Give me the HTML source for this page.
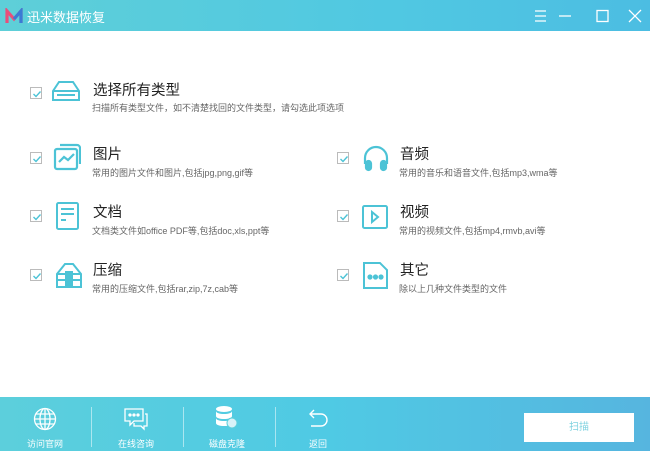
<!DOCTYPE html>
<html><head><meta charset="utf-8"><style>
*{margin:0;padding:0;box-sizing:border-box}
body{width:650px;height:451px;background:#fff;position:relative;overflow:hidden;font-family:"Liberation Sans","Noto Sans CJK SC",sans-serif}
.top{position:absolute;left:0;top:0;width:650px;height:31px;background:linear-gradient(90deg,#5ecfd8,#50c8e2 60%,#4cbde2)}
.title{position:absolute;left:27px;top:7px;color:#fff;font-size:13px}
.bot{position:absolute;left:0;top:397px;width:650px;height:54px;background:linear-gradient(90deg,#5ccfdc,#4fcae4 50%,#56b5df)}
.cb{position:absolute;width:12px;height:12px;border:1px solid #bbb;background:#fff}
.cb svg{position:absolute;left:1px;top:1px}
.t{position:absolute;font-size:14.5px;color:#222}
.s{position:absolute;font-size:9px;color:#666;white-space:nowrap}
.ic{position:absolute}
.bl{position:absolute;color:#fff;font-size:9px;text-align:center;width:60px}
.sep{position:absolute;top:407px;width:1px;height:40px;background:rgba(255,255,255,.5)}
</style></head><body>
<div class="top">
<svg style="position:absolute;left:5px;top:8px" width="18" height="16"><path d="M2 15V3l7 8 7-8v12" fill="none" stroke="#e84f7a" stroke-width="3.2"/><path d="M9 11l7-8v12" fill="none" stroke="#3a7bd5" stroke-width="3.2"/></svg>
<div class="title">迅米数据恢复</div>
<svg style="position:absolute;left:533px;top:9px" width="110" height="14" fill="none" stroke="#fff" stroke-width="1.3">
<path d="M2 2h11M2 7h11M2 12h11"/><path d="M26 7h12"/><rect x="64" y="1.5" width="11" height="11"/><path d="M96 1l12 12M108 1L96 13"/></svg>
</div>

<div class="cb" style="left:30px;top:87px"><svg width="10" height="10"><path d="M1.5 5l2.5 2.5L8.5 2.5" fill="none" stroke="#4cc3d6" stroke-width="1.4"/></svg></div>
<svg class="ic" style="left:52px;top:80px" width="28" height="22" fill="none" stroke="#4cc3d6" stroke-width="2"><path d="M7 2h14l6 9v9H1v-9z"/><path d="M1 11h26M5 15h18"/></svg>
<div class="t" style="left:93px;top:79px">选择所有类型</div>
<div class="s" style="left:92px;top:101px">扫描所有类型文件，如不清楚找回的文件类型，请勾选此项选项</div>

<div class="cb" style="left:30px;top:152px"><svg width="10" height="10"><path d="M1.5 5l2.5 2.5L8.5 2.5" fill="none" stroke="#4cc3d6" stroke-width="1.4"/></svg></div>
<svg class="ic" style="left:53px;top:143px" width="28" height="28" fill="none" stroke="#4cc3d6" stroke-width="2.2"><rect x="2" y="6" width="22" height="20" rx="2"/><path d="M7 2h17a3 3 0 0 1 3 3v16"/><path d="M6 19l5-5 4 3 6-6"/></svg>
<div class="t" style="left:93px;top:143px">图片</div>
<div class="s" style="left:92px;top:166px">常用的图片文件和图片,包括jpg,png,gif等</div>

<div class="cb" style="left:30px;top:210px"><svg width="10" height="10"><path d="M1.5 5l2.5 2.5L8.5 2.5" fill="none" stroke="#4cc3d6" stroke-width="1.4"/></svg></div>
<svg class="ic" style="left:56px;top:202px" width="24" height="28" fill="none" stroke="#4cc3d6" stroke-width="2"><rect x="1" y="1" width="21" height="26" rx="1.5"/><path d="M5 7h13M5 12h13M5 18h5" /></svg>
<div class="t" style="left:93px;top:201px">文档</div>
<div class="s" style="left:92px;top:224px">文档类文件如office PDF等,包括doc,xls,ppt等</div>

<div class="cb" style="left:30px;top:269px"><svg width="10" height="10"><path d="M1.5 5l2.5 2.5L8.5 2.5" fill="none" stroke="#4cc3d6" stroke-width="1.4"/></svg></div>
<svg class="ic" style="left:55px;top:262px" width="28" height="26" fill="none" stroke="#4cc3d6" stroke-width="2"><path d="M2 12L10 2h8l8 10v13H2z"/><path d="M2 12h24M2 18h24"/><rect x="11" y="10" width="6" height="15" fill="#4cc3d6"/></svg>
<div class="t" style="left:93px;top:259px">压缩</div>
<div class="s" style="left:92px;top:282px">常用的压缩文件,包括rar,zip,7z,cab等</div>

<div class="cb" style="left:337px;top:152px"><svg width="10" height="10"><path d="M1.5 5l2.5 2.5L8.5 2.5" fill="none" stroke="#4cc3d6" stroke-width="1.4"/></svg></div>
<svg class="ic" style="left:362px;top:144px" width="28" height="28" fill="none" stroke="#4cc3d6" stroke-width="2.2"><path d="M3 20v-6a11 11 0 0 1 22 0v6"/><rect x="4" y="17" width="5" height="9" rx="2.5" fill="#4cc3d6"/><rect x="19" y="17" width="5" height="9" rx="2.5" fill="#4cc3d6"/></svg>
<div class="t" style="left:400px;top:143px">音频</div>
<div class="s" style="left:399px;top:166px">常用的音乐和语音文件,包括mp3,wma等</div>

<div class="cb" style="left:337px;top:210px"><svg width="10" height="10"><path d="M1.5 5l2.5 2.5L8.5 2.5" fill="none" stroke="#4cc3d6" stroke-width="1.4"/></svg></div>
<svg class="ic" style="left:362px;top:205px" width="26" height="24" fill="none" stroke="#4cc3d6" stroke-width="2"><rect x="1" y="1" width="24" height="22" rx="1.5"/><path d="M10 7l6 5-6 5z"/></svg>
<div class="t" style="left:400px;top:201px">视频</div>
<div class="s" style="left:399px;top:224px">常用的视频文件,包括mp4,rmvb,avi等</div>

<div class="cb" style="left:337px;top:269px"><svg width="10" height="10"><path d="M1.5 5l2.5 2.5L8.5 2.5" fill="none" stroke="#4cc3d6" stroke-width="1.4"/></svg></div>
<svg class="ic" style="left:362px;top:262px" width="26" height="27" fill="none" stroke="#4cc3d6" stroke-width="2"><path d="M2 1h16l7 7v18H2z"/><circle cx="8" cy="15" r="1.6" fill="#4cc3d6"/><circle cx="13.5" cy="15" r="1.6" fill="#4cc3d6"/><circle cx="19" cy="15" r="1.6" fill="#4cc3d6"/></svg>
<div class="t" style="left:400px;top:259px">其它</div>
<div class="s" style="left:399px;top:282px">除以上几种文件类型的文件</div>

<div class="bot"></div>
<svg style="position:absolute;left:33px;top:407px" width="24" height="24" fill="none" stroke="#fff" stroke-width="1.3"><circle cx="12" cy="12" r="10.5"/><ellipse cx="12" cy="12" rx="5" ry="10.5"/><path d="M12 1.5v21M1.5 12h21M3 7h18M3 17h18"/></svg>
<div class="bl" style="left:15px;top:437px">访问官网</div>
<div class="sep" style="left:91px"></div>
<svg style="position:absolute;left:123px;top:407px" width="26" height="24" fill="none" stroke="#fff" stroke-width="1.3"><path d="M2 2h18v12h-9l-4 4v-4H2z"/><path d="M22 7h2v12h-3v3l-3-3h-7v-3"/><circle cx="7" cy="8" r="1" fill="#fff"/><circle cx="11" cy="8" r="1" fill="#fff"/><circle cx="15" cy="8" r="1" fill="#fff"/></svg>
<div class="bl" style="left:106px;top:437px">在线咨询</div>
<div class="sep" style="left:183px"></div>
<svg style="position:absolute;left:214px;top:405px" width="26" height="26" fill="#fff"><ellipse cx="10" cy="4" rx="8" ry="3"/><path d="M2 6c0 4 16 4 16 0v5c0 4-16 4-16 0z"/><path d="M2 13c0 4 16 4 16 0v5c0 4-16 4-16 0z"/><circle cx="18" cy="18" r="5" fill="#d8f2f8" stroke="#5ccfdc"/></svg>
<div class="bl" style="left:197px;top:437px">磁盘克隆</div>
<div class="sep" style="left:275px"></div>
<svg style="position:absolute;left:306px;top:409px" width="24" height="20" fill="none" stroke="#fff" stroke-width="1.4"><path d="M4 5h11a6 6 0 0 1 0 12H5"/><path d="M8 1L4 5l4 4"/></svg>
<div class="bl" style="left:288px;top:437px">返回</div>
<div style="position:absolute;left:524px;top:413px;width:110px;height:29px;background:#fff;color:#7fd2e0;font-size:10px;text-align:center;line-height:29px">扫描</div>
</body></html>
